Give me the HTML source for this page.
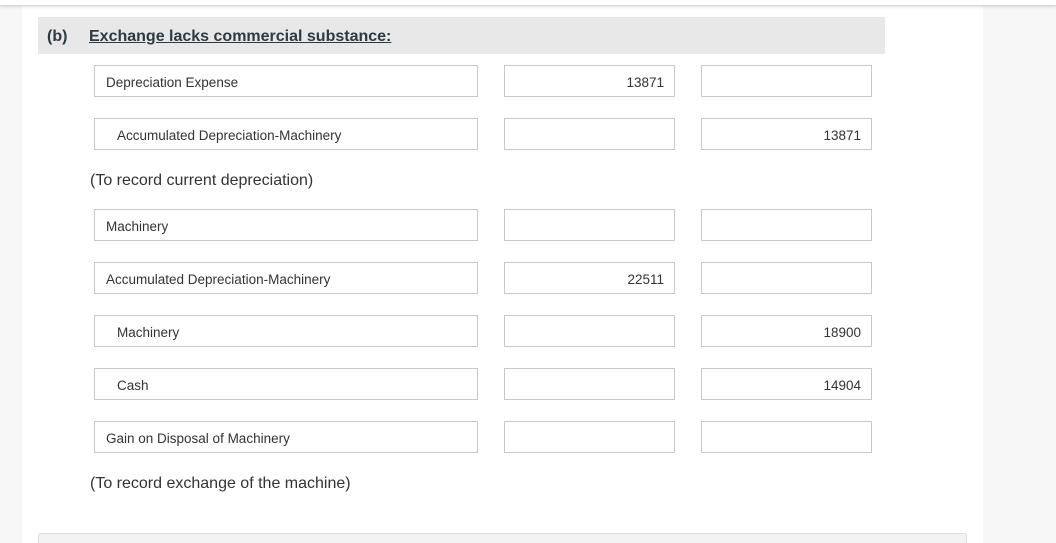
<!DOCTYPE html>
<html><head><meta charset="utf-8"><style>
html,body{margin:0;width:1056px;height:543px;overflow:hidden}
body{background:#f7f7f7;font-family:"Liberation Sans",sans-serif;position:relative}
.panel{position:absolute;left:22px;top:0;width:961px;height:543px;background:#fff}
.top{position:absolute;left:0;top:0;width:1056px;height:5px;background:#fff;border-bottom:1px solid #d8d8d8;box-shadow:0 1px 3px rgba(0,0,0,.12)}
.hdr{position:absolute;left:38px;top:17px;width:847px;height:37px;background:#e8e8e8}
.hdr b{position:absolute;left:9px;top:11px;font-size:16px;color:#2d3a42}
.hdr u{position:absolute;left:51px;top:11px;font-size:16px;color:#2d3a42;font-weight:bold}
.f{position:absolute;border:1px solid #c8c8c8;background:#fff;box-sizing:border-box;font-size:13.5px;color:#333;line-height:33px}
.a{left:94px;width:384px;height:32px}
.d{left:504px;width:171px;height:32px;text-align:right;padding-right:10px}
.c{left:701px;width:171px;height:32px;text-align:right;padding-right:10px}
.a span{position:absolute;left:11px}
.a.i span{left:22px}
.note{position:absolute;left:90px;font-size:16px;color:#333}
.bot{position:absolute;left:38px;top:533px;width:929px;height:10px;background:#f3f3f3;border:1px solid #ddd;border-bottom:none;border-radius:3px 3px 0 0;box-sizing:border-box}
</style></head><body>
<div class="panel"></div>
<div class="top"></div>
<div class="hdr"><b>(b)</b><u>Exchange lacks commercial substance:</u></div>

<div class="f a" style="top:65px"><span>Depreciation Expense</span></div>
<div class="f d" style="top:65px">13871</div>
<div class="f c" style="top:65px"></div>

<div class="f a i" style="top:118px"><span>Accumulated Depreciation-Machinery</span></div>
<div class="f d" style="top:118px"></div>
<div class="f c" style="top:118px">13871</div>

<div class="note" style="top:172px">(To record current depreciation)</div>

<div class="f a" style="top:209px"><span>Machinery</span></div>
<div class="f d" style="top:209px"></div>
<div class="f c" style="top:209px"></div>

<div class="f a" style="top:262px"><span>Accumulated Depreciation-Machinery</span></div>
<div class="f d" style="top:262px">22511</div>
<div class="f c" style="top:262px"></div>

<div class="f a i" style="top:315px"><span>Machinery</span></div>
<div class="f d" style="top:315px"></div>
<div class="f c" style="top:315px">18900</div>

<div class="f a i" style="top:368px"><span>Cash</span></div>
<div class="f d" style="top:368px"></div>
<div class="f c" style="top:368px">14904</div>

<div class="f a" style="top:421px"><span>Gain on Disposal of Machinery</span></div>
<div class="f d" style="top:421px"></div>
<div class="f c" style="top:421px"></div>

<div class="note" style="top:475px">(To record exchange of the machine)</div>
<div class="bot"></div>
</body></html>
